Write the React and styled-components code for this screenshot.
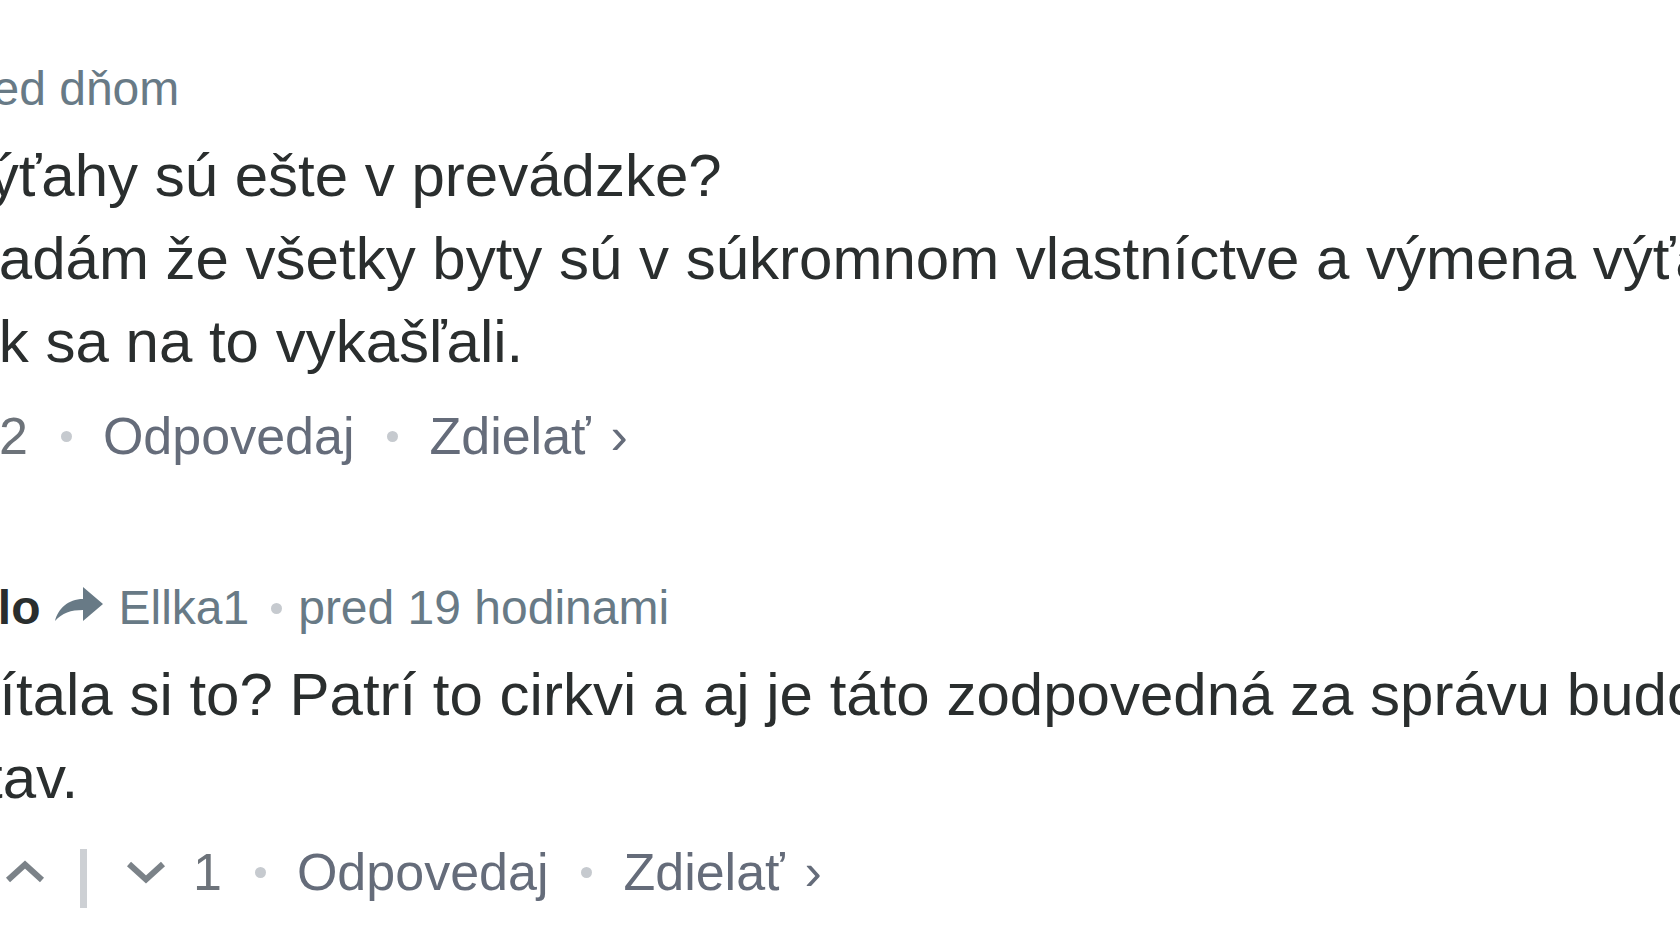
import React from 'react';
import styled, { createGlobalStyle } from 'styled-components';

const GlobalStyle = createGlobalStyle`
  html, body {
    margin: 0;
    padding: 0;
    background: #fff;
    overflow: hidden;
  }

  body {
    font-family: "Liberation Sans", Arial, Helvetica, sans-serif;
  }
`;

const Viewport = styled.div`
  width: 1680px;
  height: 945px;
  overflow: hidden;
`;

const Thread = styled.ul`
  list-style: none;
  margin: 0;
  padding: 57px 0 0;
`;

const Post = styled.li`
  list-style: none;
  margin-left: ${p => p.$indent}px;
`;

const Children = styled.ul`
  list-style: none;
  margin: 104px 0 0;
  padding: 0;
`;

const Header = styled.div`
  font-size: 48px;
  line-height: 64px;
  color: #687a86;
  white-space: nowrap;
`;

const Author = styled.span`
  font-weight: 700;
  color: #2a2e2e;
`;

const ReplyArrow = styled.svg`
  width: 48px;
  height: 36px;
  margin-left: 15px;
  vertical-align: 2px;
  fill: #687a86;
`;

const ParentName = styled.span`
  margin-left: 15px;
`;

const Bullet = styled.span`
  display: inline-block;
  width: ${p => p.$size}px;
  height: ${p => p.$size}px;
  border-radius: 50%;
  background: #c6cacf;
  margin: 0 ${p => p.$right}px 0 ${p => p.$left}px;
  vertical-align: ${p => p.$lift}px;
`;

const Body = styled.p`
  margin: 13px 0 0;
  font-size: 60px;
  line-height: 83px;
  color: #2a2e2e;
  white-space: pre;
`;

const Footer = styled.div`
  margin-top: 17px;
  font-size: 52px;
  line-height: 72px;
  color: #656c7a;
  white-space: nowrap;
`;

const Chevron = styled.svg`
  width: 42px;
  height: 24px;
  margin-left: ${p => p.$gap}px;
  vertical-align: 6px;
  fill: none;
  stroke: #7b8288;
  stroke-width: 6;
`;

const Divider = styled.span`
  display: inline-block;
  width: 7px;
  height: 59px;
  margin-left: 34px;
  background: #cdd0d4;
  vertical-align: -18px;
`;

const Count = styled.span`
  margin-left: 26px;
  color: #6d737a;
`;

const Action = styled.span`
  color: #656c7a;
`;

const Caret = styled.span`
  margin-left: 20px;
  color: #656c7a;
`;

const VoteUp = () => (
  <Chevron $gap={48} viewBox="0 0 42 24">
    <polyline points="4,20 21,4.5 38,20" />
  </Chevron>
);

const VoteDown = () => (
  <Chevron $gap={38} viewBox="0 0 42 24">
    <polyline points="4,4 21,19.5 38,4" />
  </Chevron>
);

const ForwardIcon = () => (
  <ReplyArrow viewBox="0 0 48 36">
    <path d="M0 35 C3 23 13 13 28 13 L28 1 L48 18 L28 35 L28 24 C16 24 7 27 0 35 Z" />
  </ReplyArrow>
);

const PostFooter = ({ votes }) => (
  <Footer>
    <VoteUp />
    <Divider />
    <VoteDown />
    <Count>{votes}</Count>
    <Bullet $size={11} $left={33} $right={31} $lift={12} />
    <Action>Odpovedaj</Action>
    <Bullet $size={11} $left={33} $right={31} $lift={12} />
    <Action>Zdielať</Action>
    <Caret>›</Caret>
  </Footer>
);

const Comment = ({ indent, author, replyTo, time, text, votes, children }) => (
  <Post $indent={indent}>
    <Header>
      <Author>{author}</Author>
      {replyTo && (
        <>
          <ForwardIcon />
          <ParentName>{replyTo}</ParentName>
        </>
      )}
      <Bullet $size={11} $left={22} $right={16} $lift={10} />
      <span>{time}</span>
    </Header>
    <Body>{text}</Body>
    <PostFooter votes={votes} />
    {children && <Children>{children}</Children>}
  </Post>
);

const App = () => (
  <Viewport>
    <GlobalStyle />
    <Thread>
      <Comment
        indent={-238}
        author="Ellka1"
        time="pred dňom"
        votes={2}
        text={'Ale ich výťahy sú ešte v prevádzke?\nPredpokladám že všetky byty sú v súkromnom vlastníctve a výmena výťahov je\ndrahá, tak sa na to vykašľali.'}
      >
        <Comment
          indent={194}
          author="Tilo"
          replyTo="Ellka1"
          time="pred 19 hodinami"
          votes={1}
          text={'Čítala si to? Patrí to cirkvi a aj je táto zodpovedná za správu budovy a jej\nstav.'}
        />
      </Comment>
    </Thread>
  </Viewport>
);

export default App;
